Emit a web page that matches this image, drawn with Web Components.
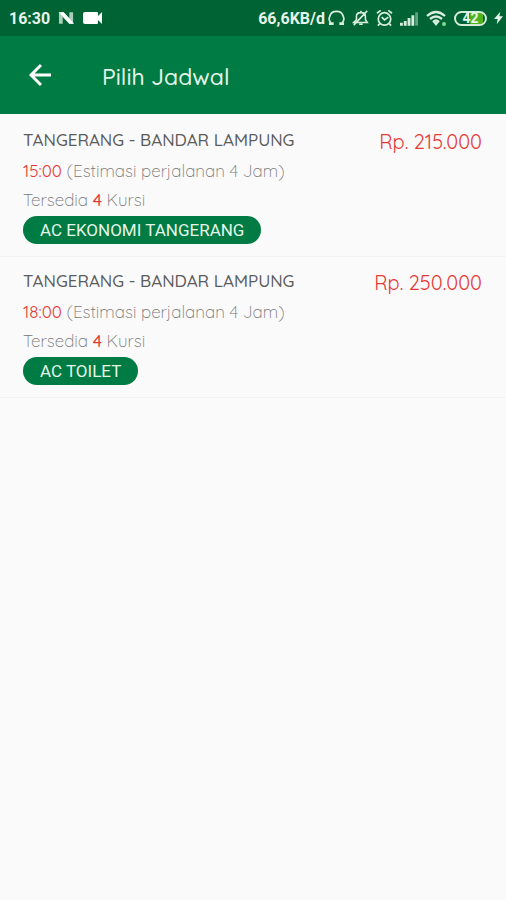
<!DOCTYPE html>
<html lang="id">
<head>
<meta charset="utf-8">
<meta name="viewport" content="width=device-width, initial-scale=1">
<title>Pilih Jadwal</title>
<style>
  html, body { margin: 0; min-height: 100%; background: #fafafa; }
  body { font-family: Quicksand, Inter, sans-serif; }
</style>
</head>
<body>
<schedule-page>
  <status-bar slot="status" time="16:30" speed="66,6KB/d" battery="42"></status-bar>
  <app-header slot="header">Pilih Jadwal</app-header>
  <schedule-card time="15:00" duration="4 Jam" seats="4" price="Rp. 215.000">
    TANGERANG - BANDAR LAMPUNG
    <class-badge slot="badge">AC EKONOMI TANGERANG</class-badge>
  </schedule-card>
  <schedule-card time="18:00" duration="4 Jam" seats="4" price="Rp. 250.000">
    TANGERANG - BANDAR LAMPUNG
    <class-badge slot="badge">AC TOILET</class-badge>
  </schedule-card>
</schedule-page>

<script>
const define = (name, html, fill) => customElements.define(name, class extends HTMLElement {
  constructor() {
    super();
    const template = document.createElement('template');
    template.innerHTML = html;
    this.attachShadow({ mode: 'open' }).append(template.content.cloneNode(true));
  }
  connectedCallback() {
    for (const key of fill || []) {
      this.shadowRoot.querySelector('.' + key).textContent = this.getAttribute(key);
    }
  }
});

define('schedule-page', `
  <style>
    :host { display: block; min-height: 100vh; background: #fafafa; }
    main { display: flex; flex-direction: column; padding-top: 2px; }
  </style>
  <slot name="status"></slot>
  <slot name="header"></slot>
  <main><slot></slot></main>`);

define('status-bar', `
  <style>
    :host { display: flex; justify-content: space-between; align-items: center; height: 36px;
      padding: 0 3px 0 9px; box-sizing: border-box; background: #006333; color: #e6f4ea;
      font: 700 16px/20px Roboto, sans-serif; }
    .side { display: flex; align-items: center; }
    .left { gap: 8px; }
    .right { gap: 7px; }
    .time, .speed { padding-top: 2px; }
    .net { display: flex; align-items: center; gap: 3px; }
    svg { display: block; flex: none; }
    .cell { display: flex; align-items: center; justify-content: center; width: 33px; height: 15px;
      box-sizing: border-box; border: 2px solid #d5ecdb; border-radius: 8px;
      background: linear-gradient(90deg, #006333 0 14px, #4fb31d 14px 27px, #006333 27px) padding-box;
      font-size: 14px; line-height: 12px; }
  </style>
  <div class="side left">
    <span class="time"></span>
    <svg width="17" height="16" viewBox="0 0 18 16">
      <path d="M1 2v12h4V7l7 7h4V2h-4v6L6 2z" fill="#a9cdb6"/>
      <path d="M1 2h5l11 12h-5z" fill="#fff"/>
    </svg>
    <svg width="20" height="14" viewBox="0 0 20 14">
      <path d="M2 1h12q1 0 1 1v3l4-4v12l-4-4v3q0 1-1 1H2q-2 0-2-2V3q0-2 2-2z" fill="#fff"/>
    </svg>
  </div>
  <div class="side right">
    <div class="net"><span class="speed"></span>
    <svg width="17" height="18" viewBox="0 0 18 18" fill="none" stroke="#d9eedf" stroke-width="1.8">
      <path d="M3 14C1 12 1 9 2 7C3 3 6 2 9 2s6 1 7 5c1 2 1 5-1 7"/>
      <path d="M1 15h5M12 15h5" stroke-width="3"/>
    </svg></div>
    <svg width="17" height="18" viewBox="0 0 19 18" fill="none" stroke="#d9eedf" stroke-width="1.8">
      <path d="M2 14h15l-2-3V7c0-3-2-4-5-4S5 4 5 7v4zM10 1v2M8 16h4M2 17L17 1"/>
    </svg>
    <svg width="17" height="18" viewBox="0 0 18 18" fill="none" stroke="#d9eedf" stroke-width="1.8">
      <circle cx="9" cy="10" r="6.6"/><path d="M1 4l4-3M17 4l-4-3M6 8l3 3 4-3M4 15l-2 2M14 15l2 2"/>
    </svg>
    <svg width="19" height="15" viewBox="0 0 20 15" fill="#d9eedf">
      <path d="M0 12h3v3H0zM4 10h3v5H4zM8 7h3v8H8zM12 4h3v11h-3z"/><path d="M16 1h3v14h-3z" opacity=".45"/>
    </svg>
    <svg width="21" height="17" viewBox="0 0 21 17" fill="none" stroke="#d9eedf" stroke-width="2.3">
      <path d="M1 6Q10-2 19 6M4 9q6-5 12 0M7 12q3-3 6 0"/><path d="M7 12h6l-3 4z" fill="#d9eedf" stroke="none"/>
      <circle cx="18" cy="14" r="2" fill="#7edb94" stroke="none"/>
    </svg>
    <span class="cell battery"></span>
    <svg width="9" height="16" viewBox="0 0 10 16"><path d="M7 1L0 9h4l-1 6 7-9H6z" fill="#e3f3e7"/></svg>
  </div>`, ['time', 'speed', 'battery']);

define('app-header', `
  <style>
    :host { display: flex; align-items: center; height: 78px; padding: 0 24px; gap: 46px;
      box-sizing: border-box; background: #007b43; color: #e4f5e8; }
    button { display: grid; place-items: center; width: 32px; height: 32px; padding: 0; border: 0;
      background: none; color: #fff; }
    h1 { margin: 0; padding-top: 3px; font: 500 23px/30px Quicksand, Lato, sans-serif; }
  </style>
  <button type="button" aria-label="Kembali">
    <svg width="24" height="24" viewBox="0 0 24 24" fill="none" stroke="currentColor" stroke-width="2.9">
      <path d="M23 12H3M13 2L3 12l10 10"/>
    </svg>
  </button>
  <h1><slot></slot></h1>`);

define('schedule-card', `
  <style>
    :host { display: flex; justify-content: space-between; align-items: flex-start;
      padding: 14px 24px 12px 23px; border-bottom: 1px solid #f3f3f3; color: #777; }
    .info { display: flex; flex-direction: column; align-items: flex-start; }
    h2 { margin: 0 0 11px; font-size: 17px; line-height: 20px; font-weight: 500; color: #5c5c5c; white-space: nowrap; }
    p { margin: 0 0 9px; font-size: 17px; line-height: 20px; font-weight: 300; white-space: nowrap; }
    p + p { margin-bottom: 6px; }
    .time, .seats, .price { color: #e53935; }
    .time { font-weight: 400; }
    .seats { font-weight: 500; }
    .price { font-size: 20px; line-height: 24px; font-weight: 400; white-space: nowrap; }
  </style>
  <div class="info">
    <h2><slot></slot></h2>
    <p><span class="time"></span> (Estimasi perjalanan <span class="duration"></span>)</p>
    <p>Tersedia <span class="seats"></span> Kursi</p>
    <slot name="badge"></slot>
  </div>
  <span class="price"></span>`, ['time', 'duration', 'seats', 'price']);

define('class-badge', `
  <style>
    :host { display: inline-block; padding: 4px 17px; border-radius: 14px; background: #007b43;
      color: #e4f5e8; font: 400 17px/20px Roboto, sans-serif; white-space: nowrap; }
  </style>
  <slot></slot>`);
</script>
</body>
</html>
